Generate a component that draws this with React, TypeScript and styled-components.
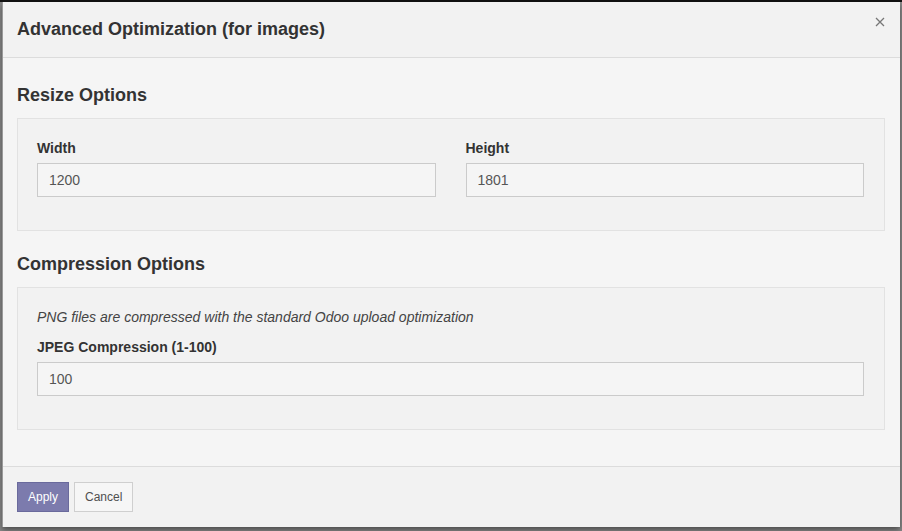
import React from 'react';
import styled, { createGlobalStyle } from 'styled-components';

const GlobalStyle = createGlobalStyle`
  * { box-sizing: border-box; }
  html, body {
    margin: 0;
    padding: 0;
    font-family: 'Liberation Sans', Arial, sans-serif;
    color: #333;
  }
`;

const Backdrop = styled.div`
  width: 902px;
  height: 531px;
  overflow: hidden;
  background: #8a8a8a;
  border-top: 2px solid #111;
  padding-left: 2px;
`;

const Modal = styled.div`
  position: relative;
  width: 898px;
  height: 525px;
  background: #f5f5f5;
  border-left: 1px solid #9a9a9a;
  box-shadow: 0 3px 6px rgba(0, 0, 0, 0.45);
  display: flex;
  flex-direction: column;
`;

const Header = styled.header`
  height: 56px;
  flex: none;
  display: flex;
  align-items: center;
  padding: 0 14px;
  background: #f2f2f2;
  border-bottom: 1px solid #dcdcdc;
`;

const Title = styled.h4`
  margin: 0 0 1px;
  font-size: 18px;
  font-weight: 700;
  line-height: 24px;
  color: #333;
`;

const Close = styled.button`
  position: absolute;
  top: 13px;
  right: 13px;
  width: 14px;
  height: 14px;
  padding: 0;
  border: 0;
  background: transparent;
  display: flex;
  align-items: center;
  justify-content: center;
`;

const Body = styled.main`
  flex: 1;
  padding: 25px 15px 0 14px;
  display: flex;
  flex-direction: column;
`;

const SectionTitle = styled.h3`
  margin: 0 0 11px;
  font-size: 18px;
  font-weight: 700;
  line-height: 24px;
  color: #333;
`;

const Panel = styled.section<{ $gapAfter?: number }>`
  width: 868px;
  background: #f2f2f2;
  border: 1px solid #e2e2e2;
  padding: 20px 20px 33px 19px;
  margin-bottom: ${({ $gapAfter }) => $gapAfter ?? 0}px;
`;

const Columns = styled.div`
  display: grid;
  grid-template-columns: 1fr 1fr;
  column-gap: 30px;
`;

const Field = styled.div`
  display: flex;
  flex-direction: column;
`;

const Label = styled.label`
  font-size: 14px;
  font-weight: 700;
  line-height: 18px;
  margin-bottom: 6px;
  color: #333;
`;

const Note = styled.p`
  margin: 0 0 12px;
  font-size: 14px;
  line-height: 18px;
  font-style: italic;
  color: #444;
`;

const Input = styled.input`
  height: 34px;
  width: 100%;
  padding: 0 11px;
  font-family: inherit;
  font-size: 14px;
  color: #555;
  background: #f5f5f5;
  border: 1px solid #cbcbcb;
  border-radius: 0;
  outline: none;
`;

const Footer = styled.footer`
  height: 61px;
  flex: none;
  display: flex;
  align-items: flex-start;
  gap: 5px;
  padding: 15px 14px 0;
  background: #f2f2f2;
  border-top: 1px solid #dcdcdc;
`;

const Button = styled.button<{ $primary?: boolean }>`
  height: 30px;
  padding: 0 10px;
  font-family: inherit;
  font-size: 12px;
  border-radius: 0;
  border: 1px solid ${({ $primary }) => ($primary ? '#6a6a9c' : '#cfcfcf')};
  background: ${({ $primary }) => ($primary ? '#7c7bad' : '#f6f6f6')};
  color: ${({ $primary }) => ($primary ? '#fff' : '#4f4f4f')};
`;

export default function App() {
  return (
    <>
      <GlobalStyle />
      <Backdrop>
        <Modal>
          <Header>
            <Title>Advanced Optimization (for images)</Title>
          </Header>
          <Close aria-label="Close">
            <svg width="10" height="10" viewBox="0 0 10 10">
              <path d="M1 1L9 9M9 1L1 9" stroke="#777" strokeWidth="1.3" />
            </svg>
          </Close>
          <Body>
            <SectionTitle>Resize Options</SectionTitle>
            <Panel $gapAfter={21}>
              <Columns>
                <Field>
                  <Label>Width</Label>
                  <Input defaultValue="1200" />
                </Field>
                <Field>
                  <Label>Height</Label>
                  <Input defaultValue="1801" />
                </Field>
              </Columns>
            </Panel>
            <SectionTitle>Compression Options</SectionTitle>
            <Panel>
              <Note>PNG files are compressed with the standard Odoo upload optimization</Note>
              <Field>
                <Label>JPEG Compression (1-100)</Label>
                <Input defaultValue="100" />
              </Field>
            </Panel>
          </Body>
          <Footer>
            <Button $primary>Apply</Button>
            <Button>Cancel</Button>
          </Footer>
        </Modal>
      </Backdrop>
    </>
  );
}
